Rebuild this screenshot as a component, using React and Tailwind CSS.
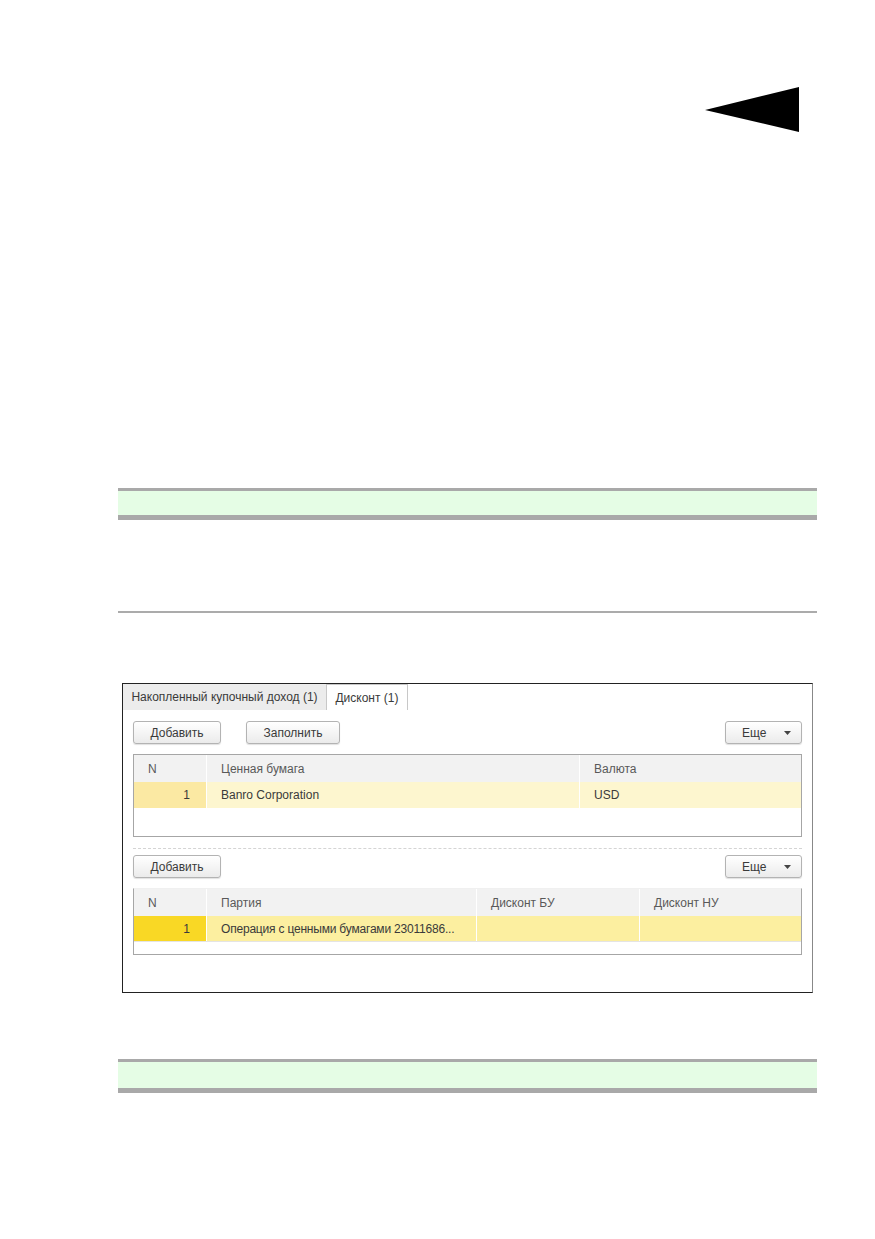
import { ChevronDown } from 'lucide-react'

const headCell = 'flex items-center px-[14px] text-[12px] text-[#595959] border-l border-white first:border-l-0 whitespace-nowrap'

function Btn({ children, className = '' }) {
  return (
    <button
      className={`h-[23px] rounded-[3px] border border-[#b3b3b3] bg-gradient-to-b from-white to-[#ebebeb] text-[12px] text-[#3a3a3a] shadow-[0_1px_1px_rgba(0,0,0,0.12)] ${className}`}
    >
      {children}
    </button>
  )
}

function MoreBtn() {
  return (
    <Btn className="flex w-[77px] items-center justify-between pl-[16px] pr-[10px]">
      <span>Еще</span>
      <svg width="7" height="4" viewBox="0 0 7 4">
        <path d="M0 0h7L3.5 4z" fill="#444" />
      </svg>
    </Btn>
  )
}

function GreenBar({ h }) {
  return <div className={`border-t-[3px] border-b-[5px] border-[#a9a9a9] bg-[#e5fde5] ${h}`} />
}

export default function App() {
  return (
    <div className="relative h-[1239px] w-[875px] bg-white font-['Liberation_Sans',Arial,sans-serif]">
      <div className="flex justify-end pr-[76px] pt-[87px]">
        <svg width="94" height="45" viewBox="0 0 94 45">
          <path d="M0 23L94 0V45z" fill="#000" />
        </svg>
      </div>

      <div className="ml-[118px] w-[699px]">
        <div className="mt-[356px]">
          <GreenBar h="h-[32px]" />
        </div>

        <div className="mt-[91px] h-[2px] bg-[#ababab]" />

        {/* form panel with tabs */}
        <div className="ml-[4px] mt-[70px] h-[310px] w-[691px] border border-[#222] border-r-[#888] bg-white">
          <div className="flex h-[26px] items-stretch">
            <div className="flex w-[203px] items-center justify-center whitespace-nowrap bg-[#ececec] text-[12px] text-[#3a3a3a]">
              Накопленный купочный доход (1)
            </div>
            <div className="flex w-[82px] items-center justify-center whitespace-nowrap border-x border-t border-[#c8c8c8] text-[12px] text-[#3a3a3a]">
              Дисконт (1)
            </div>
          </div>

          <div className="px-[10px]">
            <div className="mt-[11px] flex items-center">
              <Btn className="w-[88px]">Добавить</Btn>
              <Btn className="ml-[25px] w-[94px]">Заполнить</Btn>
              <div className="ml-auto">
                <MoreBtn />
              </div>
            </div>

            <div className="mt-[10px] h-[83px] border border-[#a6a6a6]">
              <div className="grid h-[27px] grid-cols-[72px_373px_1fr] bg-[#f2f2f2]">
                <div className={headCell}>N</div>
                <div className={headCell}>Ценная бумага</div>
                <div className={headCell}>Валюта</div>
              </div>
              <div className="grid h-[26px] grid-cols-[72px_373px_1fr] text-[12px] text-[#3a3a3a]">
                <div className="flex items-center justify-end bg-[#fbe9a3] px-[16px]">1</div>
                <div className="flex items-center border-l border-white bg-[#fdf6cf] px-[14px]">Banro Corporation</div>
                <div className="flex items-center border-l border-white bg-[#fdf6cf] px-[14px]">USD</div>
              </div>
            </div>

            <div className="mt-[11px] border-t border-dashed border-[#d4d4d4]" />

            <div className="mt-[6px] flex items-center">
              <Btn className="w-[88px]">Добавить</Btn>
              <div className="ml-auto">
                <MoreBtn />
              </div>
            </div>

            <div className="mt-[10px] h-[67px] border border-[#a6a6a6] border-t-[#f0f0f0]">
              <div className="grid h-[27px] grid-cols-[72px_270px_163px_1fr] bg-[#f2f2f2]">
                <div className={headCell}>N</div>
                <div className={headCell}>Партия</div>
                <div className={headCell}>Дисконт БУ</div>
                <div className={headCell}>Дисконт НУ</div>
              </div>
              <div className="grid h-[26px] grid-cols-[72px_270px_163px_1fr] border-b border-[#e4e4e4] text-[12px] text-[#3a3a3a]">
                <div className="flex items-center justify-end bg-[#f9d825] px-[16px]">1</div>
                <div className="flex items-center overflow-hidden whitespace-nowrap border-l border-white bg-[#fcefa0] px-[14px] tracking-[-0.2px]">
                  Операция с ценными бумагами 23011686...
                </div>
                <div className="border-l border-white bg-[#fcefa0]" />
                <div className="border-l border-white bg-[#fcefa0]" />
              </div>
            </div>
          </div>
        </div>

        <div className="mt-[66px]">
          <GreenBar h="h-[34px]" />
        </div>
      </div>
    </div>
  )
}
